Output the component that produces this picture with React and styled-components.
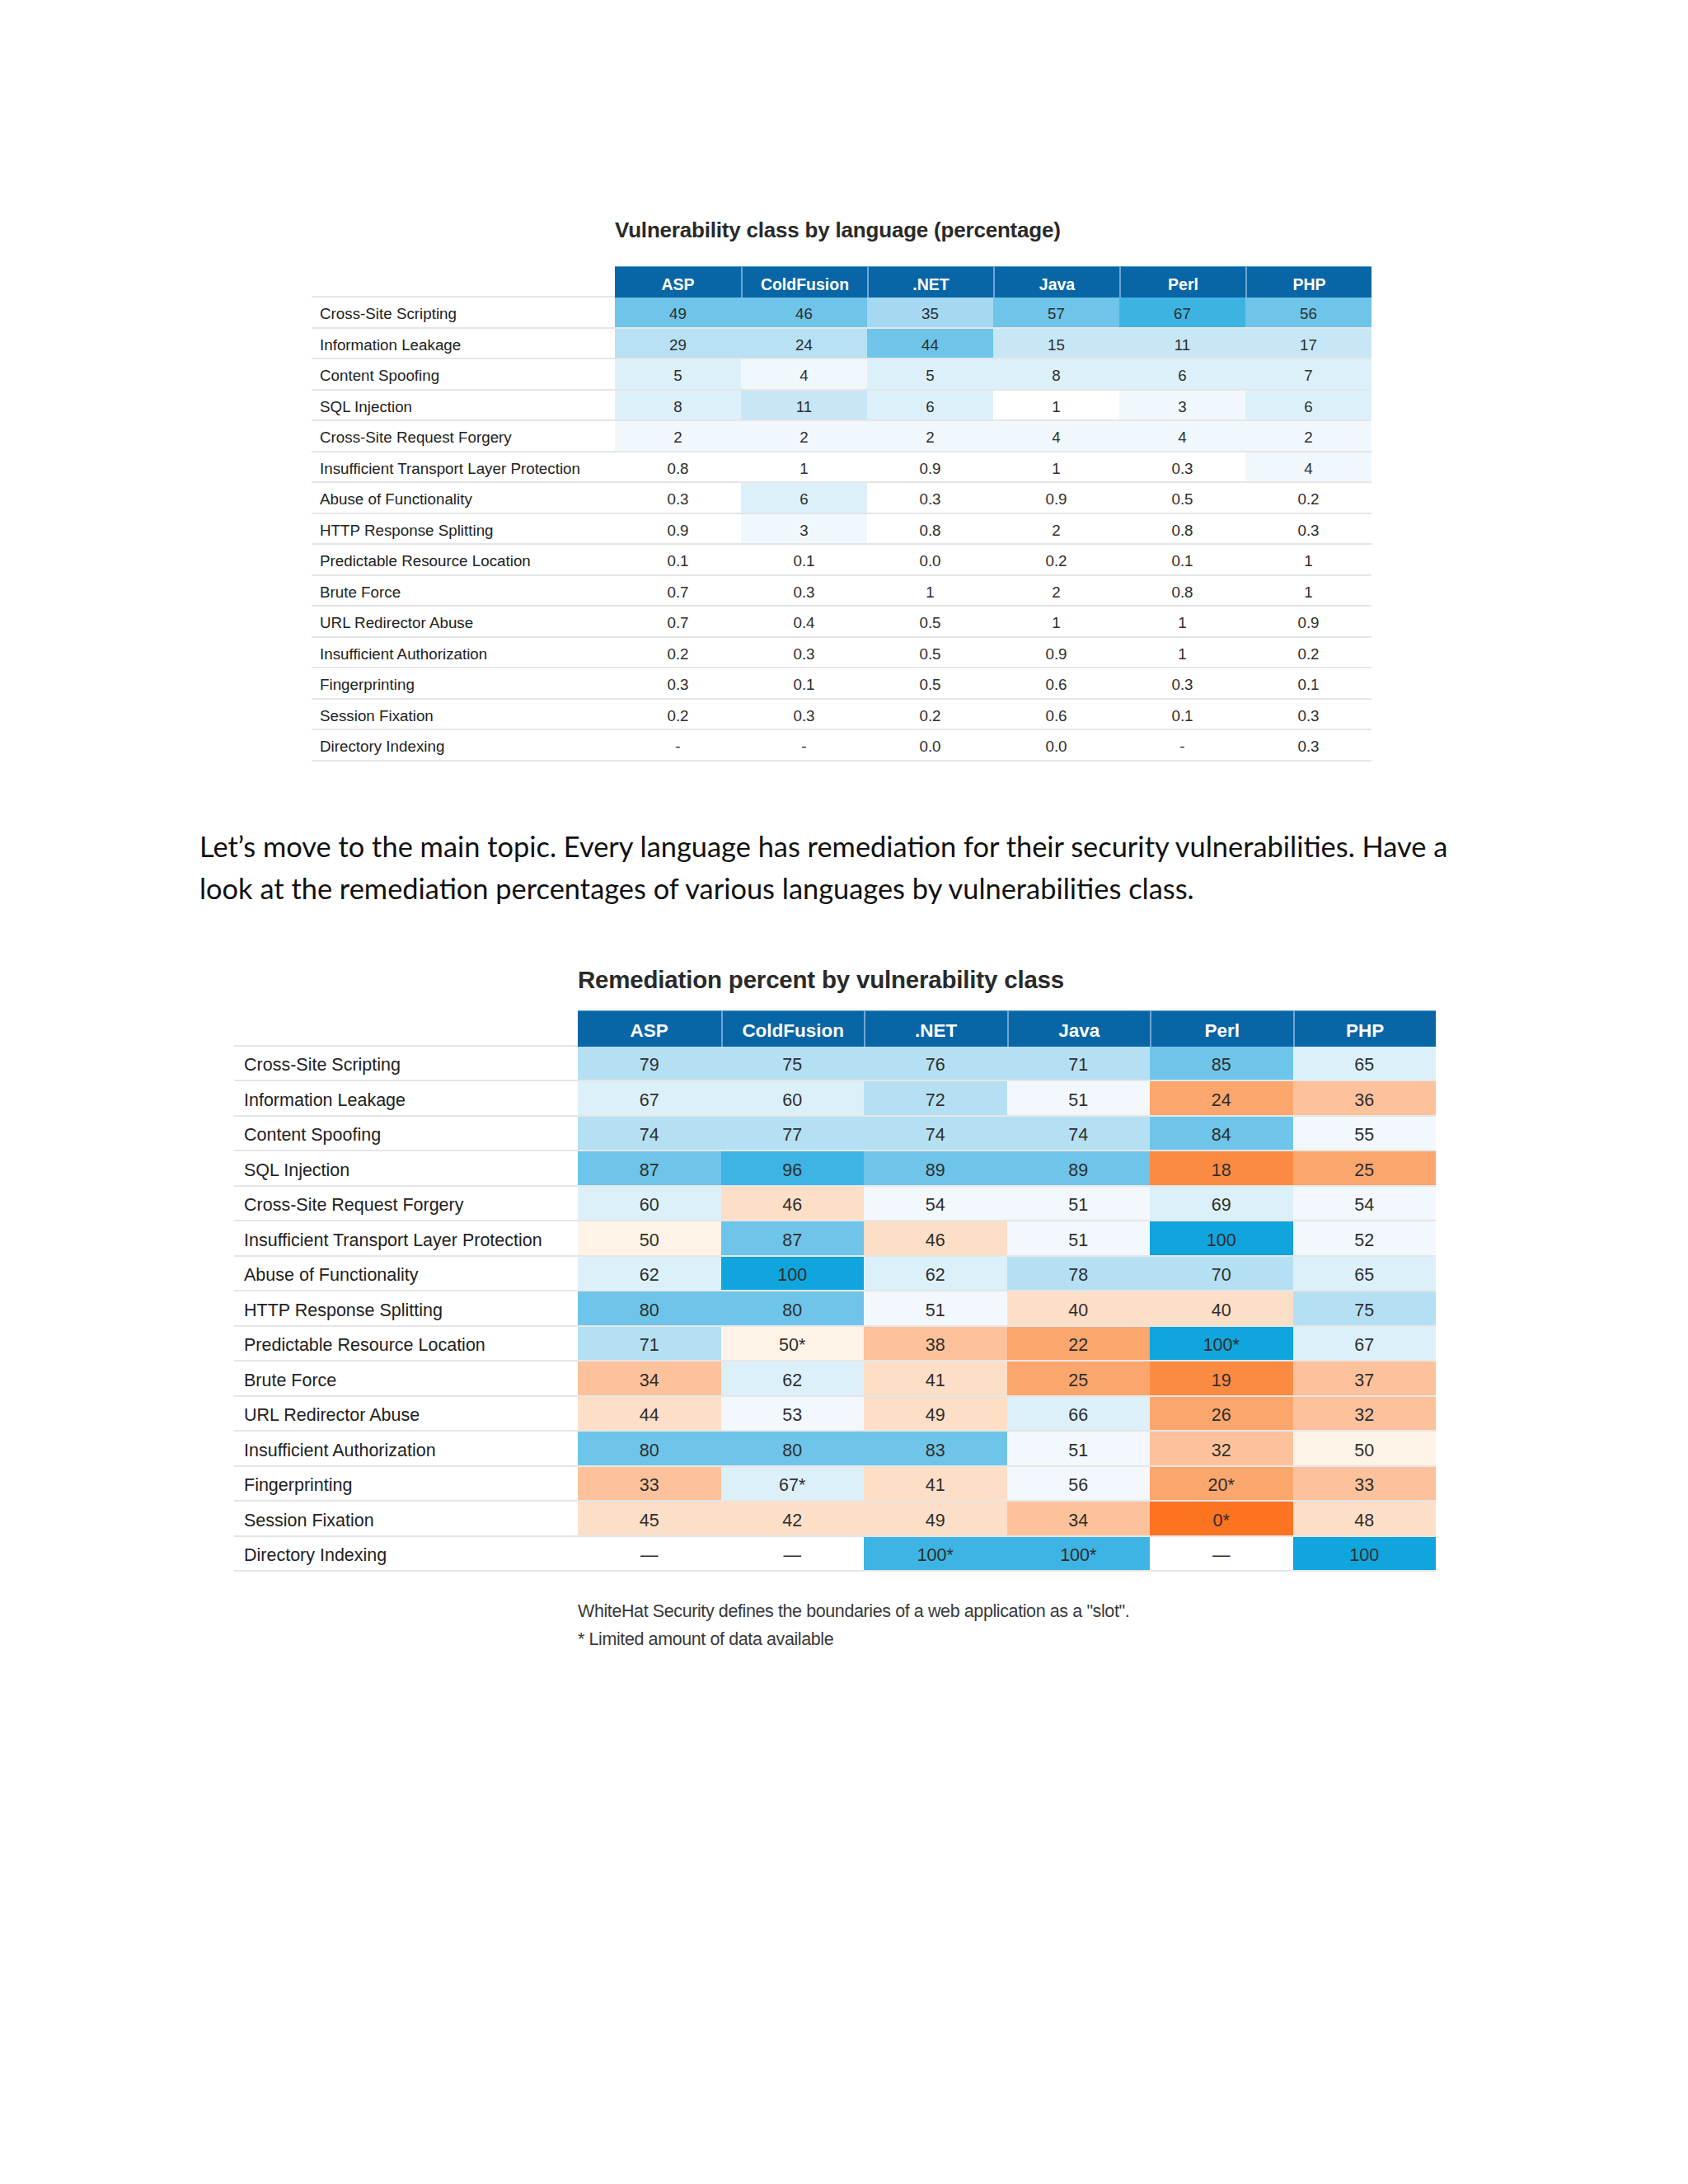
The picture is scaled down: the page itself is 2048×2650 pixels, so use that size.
import styled, { createGlobalStyle } from "styled-components";

const GlobalStyle = createGlobalStyle`
  body {
    margin: 0;
    background: #ffffff;
  }
`;

const LANGS = ["ASP", "ColdFusion", ".NET", "Java", "Perl", "PHP"];

// light blue scale used by the first table
const b = {
  w: "#ffffff",
  v: "#f1f8fd",
  p: "#dcf0fa",
  q: "#c8e7f6",
  r: "#b8e1f4",
  s: "#a6d9f1",
  m: "#6ec5e9",
  c: "#3db3e2",
};

// diverging scale for the remediation table
const d = {
  W: "#ffffff",
  D: "#10a5dd",
  C: "#3db4e3",
  M: "#6ec5e9",
  L: "#b5e0f4",
  P: "#dcf0fa",
  V: "#f2f8fd",
  Cr: "#fef3e6",
  O1: "#fddfc8",
  O2: "#fdc29b",
  O3: "#fba66c",
  O4: "#fb8b43",
  O5: "#fc7322",
};

const classRows = [
  ["Cross-Site Scripting", ["49", "m"], ["46", "m"], ["35", "s"], ["57", "m"], ["67", "c"], ["56", "m"]],
  ["Information Leakage", ["29", "r"], ["24", "r"], ["44", "m"], ["15", "q"], ["11", "q"], ["17", "q"]],
  ["Content Spoofing", ["5", "p"], ["4", "v"], ["5", "p"], ["8", "p"], ["6", "p"], ["7", "p"]],
  ["SQL Injection", ["8", "p"], ["11", "q"], ["6", "p"], ["1", "w"], ["3", "v"], ["6", "p"]],
  ["Cross-Site Request Forgery", ["2", "v"], ["2", "v"], ["2", "v"], ["4", "v"], ["4", "v"], ["2", "v"]],
  ["Insufficient Transport Layer Protection", ["0.8", "w"], ["1", "w"], ["0.9", "w"], ["1", "w"], ["0.3", "w"], ["4", "v"]],
  ["Abuse of Functionality", ["0.3", "w"], ["6", "p"], ["0.3", "w"], ["0.9", "w"], ["0.5", "w"], ["0.2", "w"]],
  ["HTTP Response Splitting", ["0.9", "w"], ["3", "v"], ["0.8", "w"], ["2", "w"], ["0.8", "w"], ["0.3", "w"]],
  ["Predictable Resource Location", ["0.1", "w"], ["0.1", "w"], ["0.0", "w"], ["0.2", "w"], ["0.1", "w"], ["1", "w"]],
  ["Brute Force", ["0.7", "w"], ["0.3", "w"], ["1", "w"], ["2", "w"], ["0.8", "w"], ["1", "w"]],
  ["URL Redirector Abuse", ["0.7", "w"], ["0.4", "w"], ["0.5", "w"], ["1", "w"], ["1", "w"], ["0.9", "w"]],
  ["Insufficient Authorization", ["0.2", "w"], ["0.3", "w"], ["0.5", "w"], ["0.9", "w"], ["1", "w"], ["0.2", "w"]],
  ["Fingerprinting", ["0.3", "w"], ["0.1", "w"], ["0.5", "w"], ["0.6", "w"], ["0.3", "w"], ["0.1", "w"]],
  ["Session Fixation", ["0.2", "w"], ["0.3", "w"], ["0.2", "w"], ["0.6", "w"], ["0.1", "w"], ["0.3", "w"]],
  ["Directory Indexing", ["-", "w"], ["-", "w"], ["0.0", "w"], ["0.0", "w"], ["-", "w"], ["0.3", "w"]],
];

const remediationRows = [
  ["Cross-Site Scripting", ["79", "L"], ["75", "L"], ["76", "L"], ["71", "L"], ["85", "M"], ["65", "P"]],
  ["Information Leakage", ["67", "P"], ["60", "P"], ["72", "L"], ["51", "V"], ["24", "O3"], ["36", "O2"]],
  ["Content Spoofing", ["74", "L"], ["77", "L"], ["74", "L"], ["74", "L"], ["84", "M"], ["55", "V"]],
  ["SQL Injection", ["87", "M"], ["96", "C"], ["89", "M"], ["89", "M"], ["18", "O4"], ["25", "O3"]],
  ["Cross-Site Request Forgery", ["60", "P"], ["46", "O1"], ["54", "V"], ["51", "V"], ["69", "P"], ["54", "V"]],
  ["Insufficient Transport Layer Protection", ["50", "Cr"], ["87", "M"], ["46", "O1"], ["51", "V"], ["100", "D"], ["52", "V"]],
  ["Abuse of Functionality", ["62", "P"], ["100", "D"], ["62", "P"], ["78", "L"], ["70", "L"], ["65", "P"]],
  ["HTTP Response Splitting", ["80", "M"], ["80", "M"], ["51", "V"], ["40", "O1"], ["40", "O1"], ["75", "L"]],
  ["Predictable Resource Location", ["71", "L"], ["50*", "Cr"], ["38", "O2"], ["22", "O3"], ["100*", "D"], ["67", "P"]],
  ["Brute Force", ["34", "O2"], ["62", "P"], ["41", "O1"], ["25", "O3"], ["19", "O4"], ["37", "O2"]],
  ["URL Redirector Abuse", ["44", "O1"], ["53", "V"], ["49", "O1"], ["66", "P"], ["26", "O3"], ["32", "O2"]],
  ["Insufficient Authorization", ["80", "M"], ["80", "M"], ["83", "M"], ["51", "V"], ["32", "O2"], ["50", "Cr"]],
  ["Fingerprinting", ["33", "O2"], ["67*", "P"], ["41", "O1"], ["56", "V"], ["20*", "O3"], ["33", "O2"]],
  ["Session Fixation", ["45", "O1"], ["42", "O1"], ["49", "O1"], ["34", "O2"], ["0*", "O5"], ["48", "O1"]],
  ["Directory Indexing", ["—", "W"], ["—", "W"], ["100*", "C"], ["100*", "C"], ["—", "W"], ["100", "D"]],
];

const Page = styled.main`
  width: 2048px;
  min-height: 2650px;
  padding-top: 262px;
  box-sizing: border-box;
  font-family: "Liberation Sans", Arial, sans-serif;
  color: #222;
`;

const Figure = styled.section`
  margin-left: ${(p) => p.$left}px;
  width: ${(p) => p.$width}px;
`;

const Caption = styled.h2`
  margin: 0 0 ${(p) => p.$gap}px ${(p) => p.$indent}px;
  font-size: ${(p) => p.$size}px;
  line-height: 34px;
  font-weight: 700;
  color: #2a2a2a;
  letter-spacing: -0.2px;
  white-space: nowrap;
`;

const Row = styled.div`
  display: grid;
  grid-template-columns: ${(p) => p.$label}px repeat(6, ${(p) => p.$col}px);
  height: ${(p) => p.$h}px;
`;

const HeadBlank = styled.div`
  box-shadow: inset 0 -2px 0 #e6e6e6;
`;

const HeadCell = styled.div`
  display: flex;
  align-items: center;
  justify-content: center;
  padding-top: ${(p) => p.$shift}px;
  background: #0866a6;
  border-top: 1px solid #4f97cb;
  border-left: ${(p) => (p.$first ? "none" : "2px solid #6ea6d2")};
  color: #ffffff;
  font-weight: 700;
  font-size: ${(p) => p.$size}px;
`;

const BodyRow = styled(Row)`
  border-bottom: 2px solid #e6e6e6;
  box-sizing: border-box;
`;

const Label = styled.div`
  display: flex;
  align-items: center;
  padding: ${(p) => p.$shift}px 0 0 ${(p) => p.$pad}px;
  font-size: ${(p) => p.$size}px;
  color: #222;
  white-space: nowrap;
`;

const Cell = styled.div`
  display: flex;
  align-items: center;
  justify-content: center;
  padding-top: ${(p) => p.$shift}px;
  background: ${(p) => p.$bg};
  font-size: ${(p) => p.$size}px;
  color: #2e2e2e;
`;

const Text = styled.p`
  margin: 77px 0 69px 242px;
  width: 1540px;
  font-family: Lato, "Open Sans", sans-serif;
  font-size: 34.4px;
  line-height: 51px;
  color: #111;
`;

const Notes = styled.div`
  margin: 31px 0 0 ${(p) => p.$indent}px;
  font-size: 21.5px;
  line-height: 34px;
  color: #3a3a3a;
  letter-spacing: -0.4px;
`;

const HeatTable = ({ spec, rows, palette }) => (
  <div>
    <Row $label={spec.label} $col={spec.col} $h={spec.head}>
      <HeadBlank />
      {LANGS.map((lang, i) => (
        <HeadCell key={lang} $first={i === 0} $size={spec.headFont} $shift={spec.shift}>
          {lang}
        </HeadCell>
      ))}
    </Row>
    {rows.map(([name, ...cells]) => (
      <BodyRow key={name} $label={spec.label} $col={spec.col} $h={spec.row}>
        <Label $pad={spec.pad} $size={spec.font} $shift={spec.shift}>
          {name}
        </Label>
        {cells.map(([value, tone], i) => (
          <Cell key={i} $bg={palette[tone]} $size={spec.font} $shift={spec.shift}>
            {value}
          </Cell>
        ))}
      </BodyRow>
    ))}
  </div>
);

const first = { label: 368, col: 153, head: 38, row: 37.5, font: 18.8, headFont: 19.5, pad: 10, shift: 5 };
const second = { label: 417, col: 173.5, head: 44, row: 42.5, font: 21.5, headFont: 22.5, pad: 12, shift: 6 };

export default function App() {
  return (
    <Page>
      <GlobalStyle />
      <Figure $left={378} $width={1286}>
        <Caption $indent={368} $size={26} $gap={27}>
          Vulnerability class by language (percentage)
        </Caption>
        <HeatTable spec={first} rows={classRows} palette={b} />
      </Figure>

      <Text>
        Let’s move to the main topic. Every language has remediation for their security vulnerabilities. Have a
        look at the remediation percentages of various languages by vulnerabilities class.
      </Text>

      <Figure $left={284} $width={1458}>
        <Caption $indent={417} $size={29.5} $gap={20}>
          Remediation percent by vulnerability class
        </Caption>
        <HeatTable spec={second} rows={remediationRows} palette={d} />
        <Notes $indent={417}>
          <div>WhiteHat Security defines the boundaries of a web application as a "slot".</div>
          <div>* Limited amount of data available</div>
        </Notes>
      </Figure>
    </Page>
  );
}
